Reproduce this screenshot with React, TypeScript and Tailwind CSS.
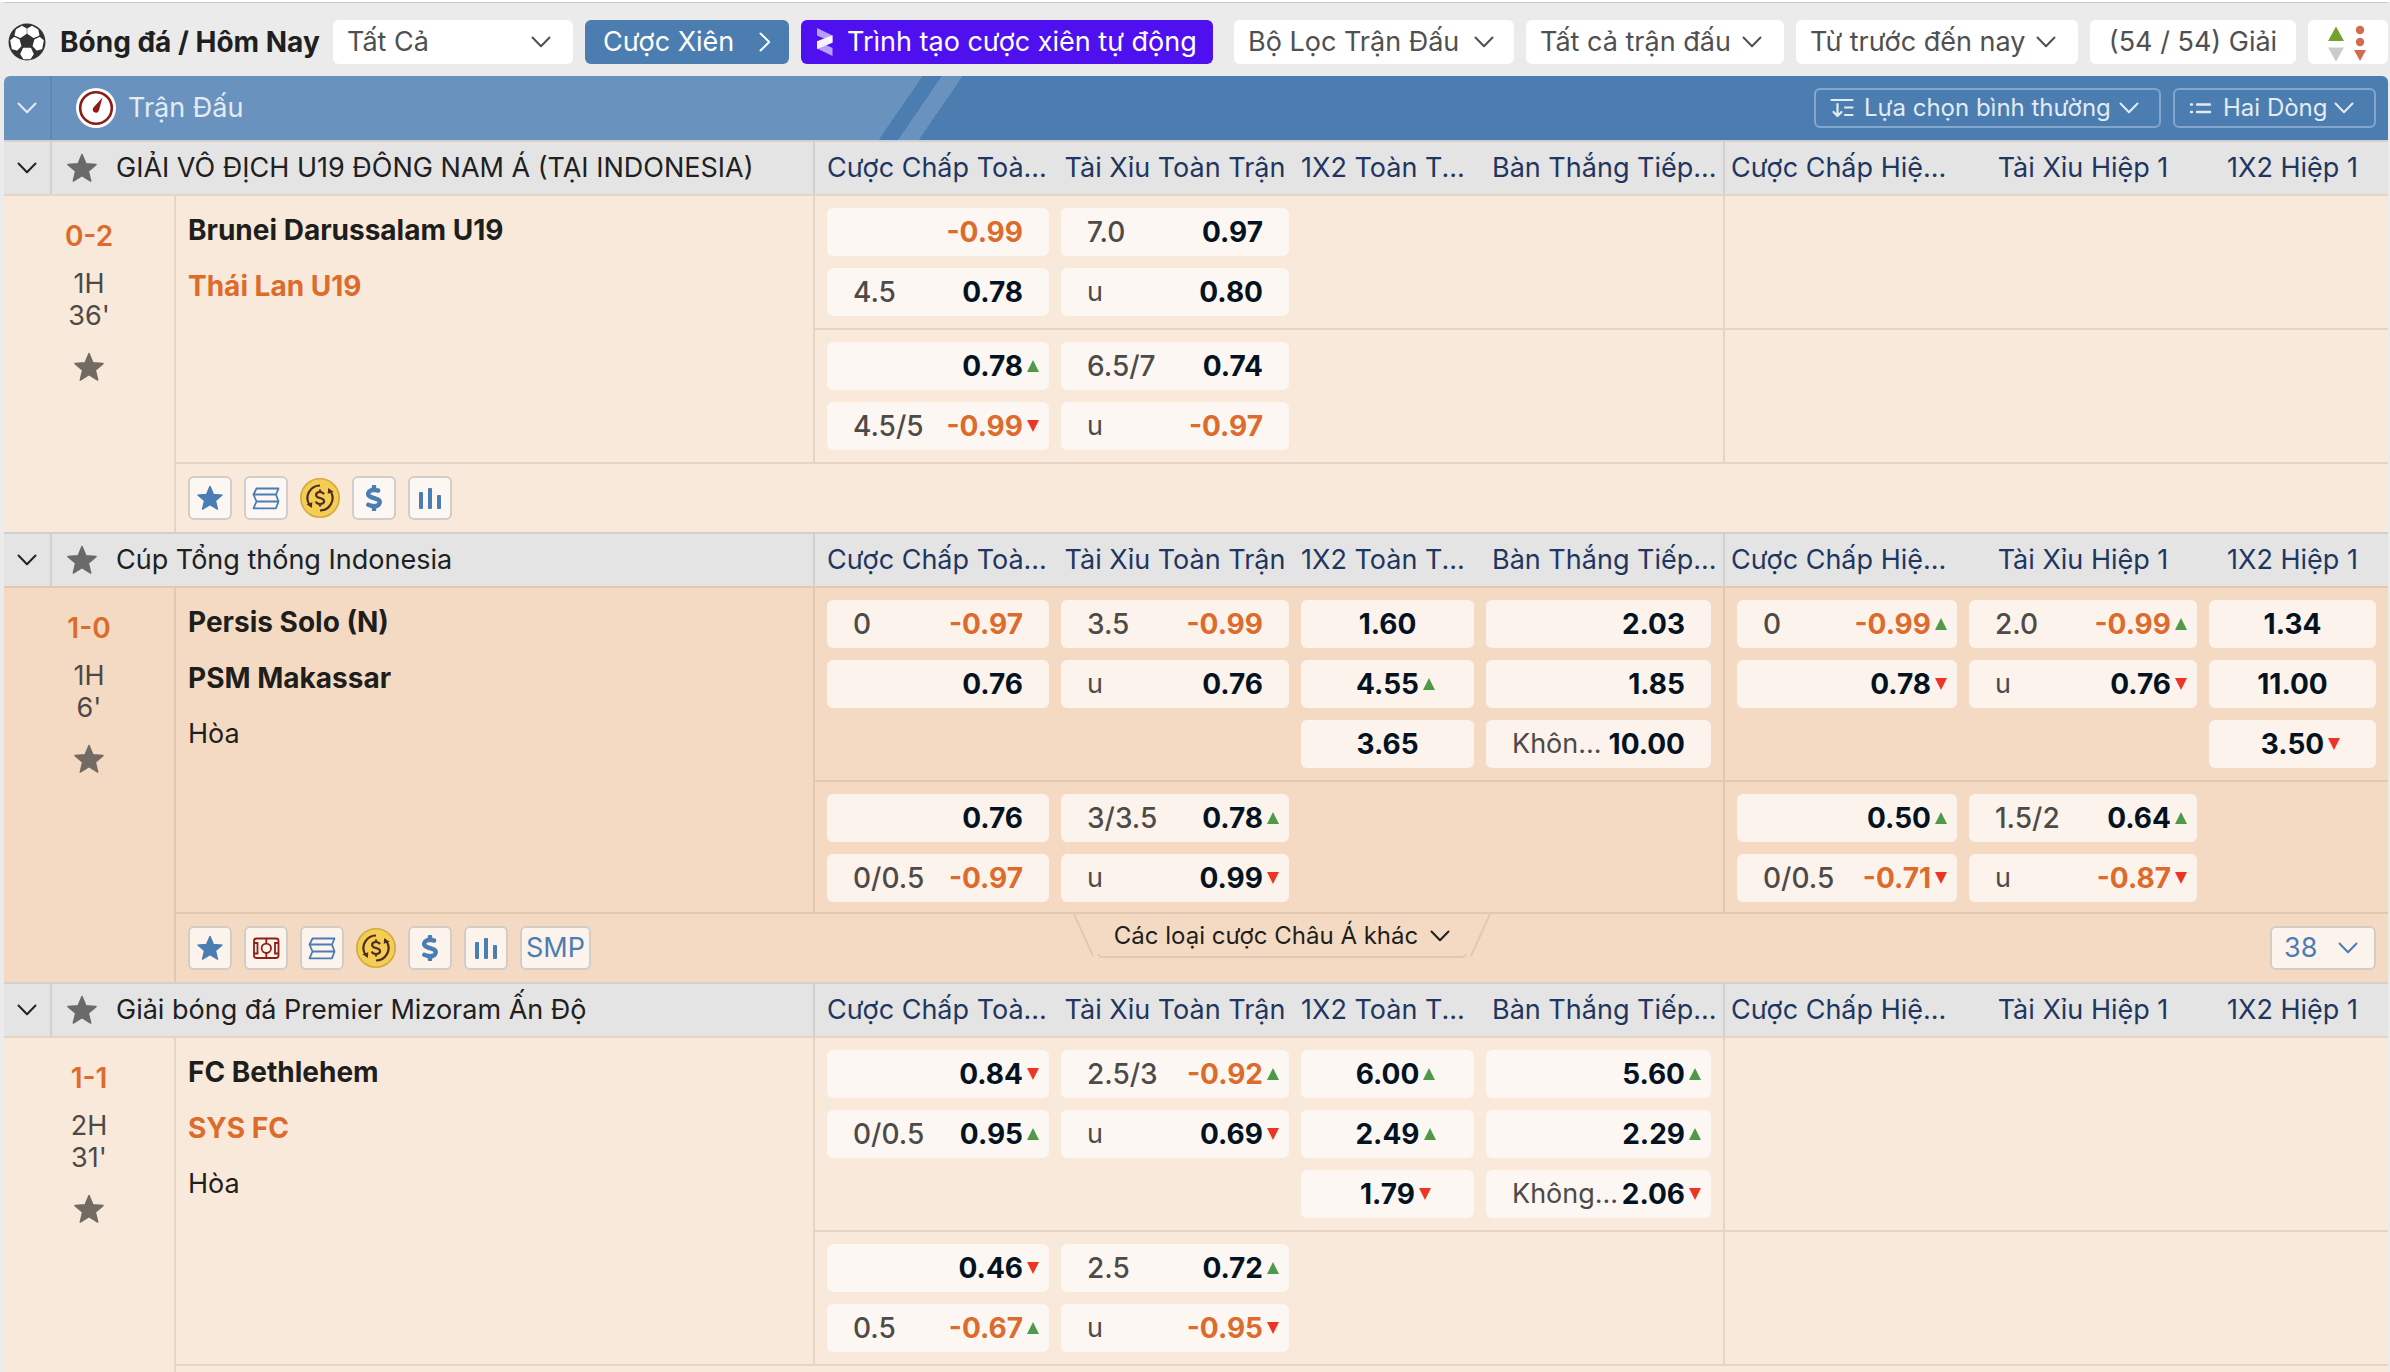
import { Fragment, type ReactNode } from "react";
import { FaDollarSign } from "react-icons/fa6";

type Move = "up" | "down";
type Price = { label?: string; price: string; move?: Move };
type Line = Price[][];
type League = {
  id: string;
  name: string;
  tone: "light" | "dark";
  score: string;
  half: string;
  minute: string;
  teams: { name: string; style: "plain" | "leader" | "draw" }[];
  lines: Line[];
  tools: ToolName[];
  more?: string;
};
type ToolName = "star" | "pitch" | "layers" | "coin" | "dollar" | "bars" | "smp";

const p = (label: string, price: string, move?: Move): Price => ({ label, price, move });

const MARKETS = [
  "Cược Chấp Toà...",
  "Tài Xỉu Toàn Trận",
  "1X2 Toàn T...",
  "Bàn Thắng Tiếp...",
  "Cược Chấp Hiệ...",
  "Tài Xỉu Hiệp 1",
  "1X2 Hiệp 1",
];

const LEAGUES: League[] = [
  {
    id: "u19",
    name: "GIẢI VÔ ĐỊCH U19 ĐÔNG NAM Á (TẠI INDONESIA)",
    tone: "light",
    score: "0-2",
    half: "1H",
    minute: "36'",
    teams: [
      { name: "Brunei Darussalam U19", style: "plain" },
      { name: "Thái Lan U19", style: "leader" },
    ],
    lines: [
      [[p("", "-0.99"), p("4.5", "0.78")], [p("7.0", "0.97"), p("u", "0.80")], [], [], [], [], []],
      [[p("", "0.78", "up"), p("4.5/5", "-0.99", "down")], [p("6.5/7", "0.74"), p("u", "-0.97")], [], [], [], [], []],
    ],
    tools: ["star", "layers", "coin", "dollar", "bars"],
  },
  {
    id: "indo",
    name: "Cúp Tổng thống Indonesia",
    tone: "dark",
    score: "1-0",
    half: "1H",
    minute: "6'",
    teams: [
      { name: "Persis Solo (N)", style: "plain" },
      { name: "PSM Makassar", style: "plain" },
      { name: "Hòa", style: "draw" },
    ],
    lines: [
      [
        [p("0", "-0.97"), p("", "0.76")],
        [p("3.5", "-0.99"), p("u", "0.76")],
        [p("", "1.60"), p("", "4.55", "up"), p("", "3.65")],
        [p("", "2.03"), p("", "1.85"), p("Khôn...", "10.00")],
        [p("0", "-0.99", "up"), p("", "0.78", "down")],
        [p("2.0", "-0.99", "up"), p("u", "0.76", "down")],
        [p("", "1.34"), p("", "11.00"), p("", "3.50", "down")],
      ],
      [
        [p("", "0.76"), p("0/0.5", "-0.97")],
        [p("3/3.5", "0.78", "up"), p("u", "0.99", "down")],
        [],
        [],
        [p("", "0.50", "up"), p("0/0.5", "-0.71", "down")],
        [p("1.5/2", "0.64", "up"), p("u", "-0.87", "down")],
        [],
      ],
    ],
    tools: ["star", "pitch", "layers", "coin", "dollar", "bars", "smp"],
    more: "38",
  },
  {
    id: "mizoram",
    name: "Giải bóng đá Premier Mizoram Ấn Độ",
    tone: "light",
    score: "1-1",
    half: "2H",
    minute: "31'",
    teams: [
      { name: "FC Bethlehem", style: "plain" },
      { name: "SYS FC", style: "leader" },
      { name: "Hòa", style: "draw" },
    ],
    lines: [
      [
        [p("", "0.84", "down"), p("0/0.5", "0.95", "up")],
        [p("2.5/3", "-0.92", "up"), p("u", "0.69", "down")],
        [p("", "6.00", "up"), p("", "2.49", "up"), p("", "1.79", "down")],
        [p("", "5.60", "up"), p("", "2.29", "up"), p("Không...", "2.06", "down")],
        [],
        [],
        [],
      ],
      [
        [p("", "0.46", "down"), p("0.5", "-0.67", "up")],
        [p("2.5", "0.72", "up"), p("u", "-0.95", "down")],
        [],
        [],
        [],
        [],
        [],
      ],
    ],
    tools: [],
  },
];

const TONES = {
  light: { row: "bg-[#f8e9da]", line: "border-[#e6d5c5]", cell: "bg-[#fcf7f2]" },
  dark: { row: "bg-[#f5dac3]", line: "border-[#e3c8b0]", cell: "bg-[#fcf3ec]" },
};

/* ---------- icons ---------- */

function Chevron({ className = "" }: { className?: string }) {
  return (
    <svg viewBox="0 0 20 12" className={"h-3 w-5 shrink-0 " + className} fill="none" stroke="currentColor" strokeWidth="2" strokeLinecap="round" strokeLinejoin="round" aria-hidden="true">
      <path d="M1.5 1.5 10 10.2l8.500-8.700" />
    </svg>
  );
}

function StarShape({ className = "" }: { className?: string }) {
  return (
    <svg viewBox="0 0 30 30" className={"shrink-0 " + className} fill="currentColor" stroke="currentColor" strokeWidth="1.500" strokeLinejoin="round" aria-hidden="true">
      <path d="M15 1.500 18.900 10.800 29 11.600 21.300 18.100 23.700 28 15 22.700 6.300 28 8.700 18.100 1 11.600 11.100 10.800Z" />
    </svg>
  );
}

function Ball() {
  return (
    <svg viewBox="0 0 38 38" className="size-[38px] shrink-0" aria-hidden="true">
      <circle cx="19" cy="19" r="18.500" fill="#333" />
      <g fill="#fff" stroke="#fff" strokeWidth="1.500" strokeLinejoin="round">
        <path d="M8.500 6.800 14 3.600 18 5.800V10.500L12.500 14.200 7.300 12Z" />
        <path d="M29.500 6.800 24 3.600 20 5.800V10.500L25.500 14.200 30.700 12Z" />
        <path d="M3 17.500 6.300 14.800 11 17 12.600 23 9 26.700 4.500 25.500Z" />
        <path d="M35 17.500 31.700 14.800 27 17 25.400 23 29 26.700 33.500 25.500Z" />
        <path d="M15.500 25.500H22.500L25 31 22 35.500H16L13 31Z" />
      </g>
    </svg>
  );
}

function Gauge() {
  return (
    <svg viewBox="0 0 40 40" className="size-10 shrink-0" aria-hidden="true">
      <circle cx="20" cy="20" r="20" fill="#fff" />
      <circle cx="20" cy="20" r="15.800" fill="none" stroke="#8b1d14" strokeWidth="2.600" />
      <path d="M26.500 9.500 23 22.300a3.200 3.200 0 1 1-5.600-2.800Z" fill="#8b1d14" />
    </svg>
  );
}

function ParlayMark() {
  return (
    <svg viewBox="0 0 16 28" className="h-7 w-4 shrink-0" fill="#fff" aria-hidden="true">
      <path d="M0 0 15.500 7.500V14.500L8 11 0 7.500Z" opacity=".6" />
      <path d="M0 20.500 8 16.500 15.500 20V28L0 20.500Z" opacity=".6" />
      <path d="M15.500 7.300V14.800L0 21V13.300Z" opacity=".95" />
    </svg>
  );
}

function SortMark() {
  return (
    <svg viewBox="0 0 80 44" className="h-11 w-20" aria-hidden="true">
      <path d="M28 6.500 36 21H20Z" fill="#74a02c" />
      <path d="M20 27.500H36L28 41.500Z" fill="#cbcbcb" />
      <circle cx="52" cy="10" r="4.200" fill="#d66a4e" />
      <circle cx="52" cy="22" r="4.200" fill="#d66a4e" />
      <path d="M46 30H58L52 41Z" fill="#d66a4e" />
    </svg>
  );
}

function OrderMark() {
  return (
    <svg viewBox="0 0 24 20" className="h-5 w-6" fill="none" stroke="currentColor" strokeWidth="2.200" strokeLinecap="round" strokeLinejoin="round" aria-hidden="true">
      <path d="M1.500 2H22.500M15 9.500H22.500M15 17H22.500M7.500 6V17.500M3.500 14 7.500 18 11.500 14" />
    </svg>
  );
}

function RowsMark() {
  return (
    <svg viewBox="0 0 24 20" className="h-5 w-6" fill="none" stroke="currentColor" strokeWidth="2.400" strokeLinecap="round" aria-hidden="true">
      <path d="M2 6.500H3M8 6.500H21M2 14H3M8 14H21" />
    </svg>
  );
}

function MoveMark({ move }: { move?: Move }) {
  return (
    <span className="flex w-4 shrink-0 justify-end">
      {move && (
        <svg viewBox="0 0 12 12" className={move === "up" ? "size-3 fill-[#4f9a48]" : "size-3 fill-[#ee3524]"} aria-hidden="true">
          <path d={move === "up" ? "M6 0 12 12H0Z" : "M0 0H12L6 12Z"} />
        </svg>
      )}
    </span>
  );
}

function CoinMark() {
  return (
    <svg viewBox="0 0 40 40" className="size-10" aria-hidden="true">
      <circle cx="20" cy="20" r="19.200" fill="#f5cd52" stroke="#d0ab42" strokeWidth="1.600" />
      <g fill="none" stroke="#4b2c25" strokeWidth="2.200">
        <path d="M20 7.500A12.500 12.500 0 0 0 9 26" />
        <path d="M20 32.500A12.500 12.500 0 0 0 31 14" />
      </g>
      <path d="M6.500 26.300 12.300 24.300 11.800 30Z" fill="#4b2c25" />
      <path d="M33.500 13.700 27.700 15.700 28.200 10Z" fill="#4b2c25" />
      <path d="M24 16.300c-.8-1.700-2.300-2.300-4-2.300-2.200 0-3.900 1.100-3.900 2.900 0 4.200 8 2 8 6.200 0 1.800-1.800 2.900-4.100 2.900-2 0-3.600-.8-4.200-2.500M20 11.500v3M20 26v2.500" fill="none" stroke="#4b2c25" strokeWidth="2.200" />
    </svg>
  );
}

const TOOLS: Record<Exclude<ToolName, "coin">, { label: string; art: ReactNode }> = {
  star: { label: "Yêu thích", art: <StarShape className="size-[26px]" /> },
  pitch: {
    label: "Sân",
    art: (
      <svg viewBox="2 2 40 40" className="size-10" fill="none" stroke="#8f1f17" strokeWidth="1.800" aria-hidden="true">
        <rect x="10" y="12.500" width="24.500" height="19.500" rx="2.500" />
        <path d="M22.300 12.500V17.500M22.300 27V32M10 17H13.500V27.500H10M34.500 17H31V27.500H34.500" />
        <circle cx="22.300" cy="22.300" r="4.700" />
      </svg>
    ),
  },
  layers: {
    label: "Kèo",
    art: (
      <svg viewBox="2 2 40 40" className="size-10" fill="none" stroke="currentColor" strokeWidth="1.800" strokeLinejoin="round" aria-hidden="true">
        <path d="M12.500 12.500H34.500L32 18.500 34.500 25.500 32 32.300H9.500L12.500 25.500 9.500 18.500ZM9.500 18.500H32M12.500 25.500H34.500" />
      </svg>
    ),
  },
  dollar: { label: "Rút tiền", art: <FaDollarSign className="size-[26px] stroke-current stroke-[24]" aria-hidden="true" /> },
  bars: {
    label: "Thống kê",
    art: (
      <svg viewBox="2 2 40 40" className="size-10" fill="currentColor" aria-hidden="true">
        <rect x="11" y="16" width="4" height="17" rx="1" />
        <rect x="20" y="12" width="4" height="21" rx="1" />
        <rect x="29" y="19" width="4" height="14" rx="1" />
      </svg>
    ),
  },
  smp: { label: "SMP", art: "SMP" },
};

/* ---------- controls ---------- */

function Dropdown({ label, value, box, field, chevron, icon }: { label: string; value: string; box: string; field: string; chevron: string; icon?: ReactNode }) {
  return (
    <div className={"relative flex shrink-0 items-center " + box}>
      {icon && <span className="pointer-events-none absolute left-3.5">{icon}</span>}
      <select aria-label={label} className={"h-full w-full appearance-none bg-transparent outline-none " + field}>
        <option>{value}</option>
      </select>
      <Chevron className={"pointer-events-none absolute " + chevron} />
    </div>
  );
}

function Toolbar() {
  return (
    <header className="flex items-center justify-between border-t border-[#c9c9c9] pt-[17px] pb-3 text-[27px] leading-8 text-[#505050]">
      <div className="flex items-center gap-3">
        <div className="flex items-center gap-3.5 pl-1">
          <Ball />
          <h1 className="w-[261px] text-[28px] font-bold whitespace-nowrap text-[#1f1f1f]">Bóng đá / Hôm Nay</h1>
        </div>
        <Dropdown label="Loại" value="Tất Cả" box="h-11 w-60 rounded-md bg-white" field="pl-3.5 pr-12" chevron="right-[22px]" />
        <button className="flex h-11 w-[204px] items-center justify-between rounded-md bg-[#4b7db1] pr-3.5 pl-[18px] text-white">
          Cược Xiên
          <Chevron className="-rotate-90" />
        </button>
        <button className="flex h-11 items-center gap-3.5 rounded-md bg-[#4f10f0] px-4 whitespace-nowrap text-white">
          <ParlayMark />
          Trình tạo cược xiên tự động
        </button>
      </div>
      <div className="flex items-center gap-3 whitespace-nowrap">
        <button className="flex h-11 w-[280px] items-center justify-between rounded-md bg-white pr-5 pl-3.5">
          Bộ Lọc Trận Đấu
          <Chevron />
        </button>
        <Dropdown label="Trận đấu" value="Tất cả trận đấu" box="h-11 w-[258px] rounded-md bg-white" field="pl-3.5" chevron="right-[22px]" />
        <Dropdown label="Thời gian" value="Từ trước đến nay" box="h-11 w-[282px] rounded-md bg-white" field="pl-3.5" chevron="right-[22px]" />
        <button className="h-11 w-[206px] rounded-md bg-white">(54 / 54) Giải</button>
        <button className="h-11 w-20 rounded-md bg-white" aria-label="Sắp xếp">
          <SortMark />
        </button>
      </div>
    </header>
  );
}

function MatchBar() {
  return (
    <div className="flex h-16 items-center rounded-t-md bg-[linear-gradient(124.5deg,#6993be_757px,#4b7db1_757px,#4b7db1_773px,#6993be_773px,#6993be_790px,#4b7db1_790px)] pr-3 text-[#e3ebf3]">
      <button className="flex h-full w-12 items-center border-r-2 border-[#5f89b5] pl-[13px]" aria-label="Thu gọn">
        <Chevron />
      </button>
      <div className="flex flex-1 items-center gap-3 pl-6 text-[27px]">
        <Gauge />
        <h2>Trận Đấu</h2>
      </div>
      <div className="flex gap-3 text-2xl">
        <Dropdown label="Kiểu lựa chọn" value="Lựa chọn bình thường" icon={<OrderMark />} box="h-10 w-[347px] rounded-md border-2 border-[#84a6ca]" field="pl-12" chevron="right-5" />
        <Dropdown label="Kiểu dòng" value="Hai Dòng" icon={<RowsMark />} box="h-10 w-[203px] rounded-md border-2 border-[#84a6ca]" field="pl-12" chevron="right-5" />
      </div>
    </div>
  );
}

function PriceButton({ data, centered, tone }: { data: Price; centered: boolean; tone: string }) {
  const color = data.price.startsWith("-") ? "text-[#dd6b2c]" : "text-[#04131f]";
  return (
    <button className={"flex h-12 w-full items-center rounded-md whitespace-nowrap " + (centered ? "justify-center " : "pr-2.5 pl-[26px] ") + tone}>
      {centered ? (
        <span className="w-4 shrink-0" />
      ) : (
        <span className={"min-w-0 flex-1 text-left text-[#4d4a48] " + (/\d/.test(data.label ?? "") ? "text-[28px] font-medium" : "")}>{data.label}</span>
      )}
      <span className={"text-[28px] font-bold " + color}>{data.price}</span>
      <MoveMark move={data.move} />
    </button>
  );
}

function Toolset({ tools, cell }: { tools: ToolName[]; cell: string }) {
  return (
    <div className="flex items-center gap-3">
      {tools.map((name) =>
        name === "coin" ? (
          <button key={name} className="size-10" aria-label="Đổi cược">
            <CoinMark />
          </button>
        ) : (
          <button
            key={name}
            aria-label={TOOLS[name].label}
            className={"flex h-11 min-w-11 items-center justify-center rounded-md border-2 border-[#d2cdc8] text-[#4a7db3] " + (name === "smp" ? "px-1 " : "") + cell}
          >
            {TOOLS[name].art}
          </button>
        ),
      )}
    </div>
  );
}

const SIDE_PADDING = ["pl-3 pr-1.5", "px-1.5", "px-1.5", "pl-1.5 pr-3", "pl-3 pr-1.5", "px-1.5", "pl-1.5 pr-3"];
const HEAD_PADDING = ["pl-3 text-left", "px-1.5", "pl-1.5 text-left", "pl-3 text-left", "pl-1.5 text-left", "px-1.5", "pl-1.5 pr-3"];
const TEAM_STYLES = {
  plain: "text-[28px] font-bold text-[#1e1e1c]",
  leader: "text-[28px] font-bold text-[#dd6b2c]",
  draw: "text-[#1e1e1c]",
};

function LeagueBody({ league }: { league: League }) {
  const tone = TONES[league.tone];
  const rule = "border-b-2 " + tone.line + " ";
  return (
    <tbody className={tone.row}>
      <tr className="bg-[#e4e4e4]">
        <th colSpan={2} scope="colgroup" className={"border-y-2 border-r-2 border-t-[#d1d1d1] border-r-[#d1d1d1] p-0 text-left font-normal " + (league.tone === "light" ? "border-b-[#e6d5c5]" : "border-b-[#e3c8b0]")}>
          <div className="flex h-13 items-center">
            <button className="flex h-full w-12 items-center border-r-2 border-[#d1d1d1] pl-[13px] text-[#222]" aria-label="Thu gọn giải">
              <Chevron />
            </button>
            <button className="pl-[15px] text-[#6a6a6a]" aria-label="Ghim giải">
              <StarShape className="size-[30px]" />
            </button>
            <span className="pl-[19px] text-[#202020]">{league.name}</span>
          </div>
        </th>
        {MARKETS.map((name, i) => (
          <th
            key={name}
            scope="col"
            className={
              "border-y-2 border-t-[#d1d1d1] py-0 font-normal whitespace-nowrap text-[#1f3661] " +
              (league.tone === "light" ? "border-b-[#e6d5c5] " : "border-b-[#e3c8b0] ") +
              (i === 3 ? "border-r-2 border-r-[#d1d1d1] " : "") +
              HEAD_PADDING[i]
            }
          >
            {name}
          </th>
        ))}
      </tr>
      {league.lines.map((line, row) => (
        <tr key={row} className="align-top">
          {row === 0 && (
            <Fragment>
              <td rowSpan={3} className={"border-r-2 p-0 pt-5 text-center text-[#4d4946] " + tone.line}>
                <div className="text-[28px] leading-10 font-semibold text-[#dd6b2c]">{league.score}</div>
                <div className="pt-3 leading-8">
                  {league.half}
                  <br />
                  {league.minute}
                </div>
                <button className="mt-5 text-[#726b64]" aria-label="Ghim trận">
                  <StarShape className="size-[30px]" />
                </button>
              </td>
              <td rowSpan={2} className={"border-r-2 p-0 pt-1.5 pl-3 " + rule}>
                {league.teams.map((t) => (
                  <div key={t.name} className={"leading-14 " + TEAM_STYLES[t.style]}>
                    {t.name}
                  </div>
                ))}
              </td>
            </Fragment>
          )}
          {line.map((prices, i) => (
            <td key={i} className={rule + SIDE_PADDING[i] + (i === 3 ? " border-r-2" : "") + (row === 1 && league.more ? " pt-3 pb-2.5" : " py-3")}>
              <div className="flex flex-col gap-3">
                {prices.map((price, n) => (
                  <PriceButton key={n} data={price} centered={i === 2 || i === 6} tone={tone.cell} />
                ))}
              </div>
            </td>
          ))}
        </tr>
      ))}
      <tr>
        <td colSpan={8} className="p-0">
          <div className="grid h-17 grid-cols-[1fr_auto_1fr] items-center px-3">
            <Toolset tools={league.tools} cell={tone.cell} />
            {league.more && (
              <Fragment>
                <button className="relative flex h-11 w-[418px] items-center justify-center gap-3 self-start text-2xl text-[#1e1e1c]">
                  <svg viewBox="0 0 418 44" className="absolute inset-0 h-full w-full" fill="none" stroke="#e3c8b0" strokeWidth="2" aria-hidden="true">
                    <path d="M1 0 20 42M417 0 398 42M25 40Q26 43 30 43H388Q392 43 393 40" />
                  </svg>
                  Các loại cược Châu Á khác
                  <Chevron />
                </button>
                <div className="flex justify-end">
                  <Dropdown label="Thêm kèo" value={league.more} box={"h-11 w-[106px] rounded-md border-2 border-[#d2cdc8] text-[#4a7db3] " + tone.cell} field="pl-3" chevron="right-4" />
                </div>
              </Fragment>
            )}
          </div>
        </td>
      </tr>
    </tbody>
  );
}

export default function App() {
  return (
    <main className="h-screen overflow-hidden border-t-2 border-white bg-[#ebebeb] font-['Inter','Noto_Sans',sans-serif] text-[27px] leading-8">
      <div className="pr-0.5 pl-1">
        <Toolbar />
        <MatchBar />
        <table className="w-full table-fixed border-separate border-spacing-0">
          <colgroup>
            <col className="w-[172px]" />
            <col />
            <col className="w-[240px]" />
            <col className="w-[240px]" />
            <col className="w-[185px]" />
            <col className="w-[245px]" />
            <col className="w-[238px]" />
            <col className="w-[240px]" />
            <col className="w-[185px]" />
          </colgroup>
          {LEAGUES.map((league) => (
            <LeagueBody key={league.id} league={league} />
          ))}
        </table>
      </div>
    </main>
  );
}
